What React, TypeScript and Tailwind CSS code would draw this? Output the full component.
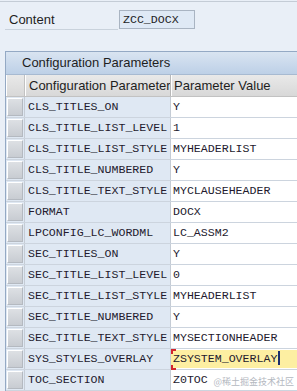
import React from "react";

const rows: [string, string][] = [
  ["CLS_TITLES_ON", "Y"],
  ["CLS_TITLE_LIST_LEVEL", "1"],
  ["CLS_TITLE_LIST_STYLE", "MYHEADERLIST"],
  ["CLS_TITLE_NUMBERED", "Y"],
  ["CLS_TITLE_TEXT_STYLE", "MYCLAUSEHEADER"],
  ["FORMAT", "DOCX"],
  ["LPCONFIG_LC_WORDML", "LC_ASSM2"],
  ["SEC_TITLES_ON", "Y"],
  ["SEC_TITLE_LIST_LEVEL", "0"],
  ["SEC_TITLE_LIST_STYLE", "MYHEADERLIST"],
  ["SEC_TITLE_NUMBERED", "Y"],
  ["SEC_TITLE_TEXT_STYLE", "MYSECTIONHEADER"],
  ["SYS_STYLES_OVERLAY", "ZSYSTEM_OVERLAY"],
  ["TOC_SECTION", "Z0TOC"],
];

const sans = "font-['Liberation_Sans',Arial,sans-serif]";
const mono = "font-['Liberation_Mono','Courier_New',monospace]";

export default function App() {
  return (
    <div className="relative w-[297px] h-[391px] overflow-hidden bg-[#e9eff7] text-[#1e1e1e]">
      <div className="h-[2px] border-b border-[#c4ccd6]" />
      <div className="flex items-start h-[49px] pt-[7px]">
        <div className={`ml-[5px] w-[113px] h-[21px] border-b border-[#c9d2dc] pl-[4px] text-[13px] leading-[21px] ${sans}`}>Content</div>
        <div className={`ml-[1px] mt-[1px] w-[76px] h-[19px] border border-[#a9b4c2] bg-[#dfe9f5] pl-[3px] text-[11.6px] leading-[17px] ${mono}`}>ZCC_DOCX</div>
      </div>

      <div className="ml-[5px] border-l border-t border-[#94a9c4]">
        <div className={`h-[23px] bg-gradient-to-b from-[#d9e4f1] to-[#bdd0e7] border-b border-[#a7bad1] pl-[16px] text-[13px] leading-[22px] ${sans}`}>
          Configuration Parameters
        </div>
        <div className="grid grid-cols-[19px_146px_1fr] h-[22px] bg-gradient-to-b from-[#e9e9e9] to-[#d8d8d8] border-b border-[#c2c2c2]">
          <div className="border-r border-[#c2c2c2] border-l border-l-white" />
          <div className={`border-r border-[#b8b8b8] border-l border-l-white pl-[3px] text-[13px] leading-[21px] whitespace-nowrap overflow-hidden ${sans}`}>Configuration Parameter</div>
          <div className={`border-l border-l-white pl-[2px] text-[13px] leading-[21px] whitespace-nowrap ${sans}`}>Parameter Value</div>
        </div>
        {rows.map(([k, v]) => {
          const focus = k === "SYS_STYLES_OVERLAY";
          return (
            <div key={k} className="grid grid-cols-[19px_146px_1fr] h-[21px] border-b border-[#ccd4de]">
              <div className="bg-[#dfe8f3] border-r border-[#c5ccd5] pl-[1px] pr-[1px] py-[1px]">
                <div className="h-full bg-gradient-to-b from-[#dde0e4] to-[#c8ccd2] border border-t-white border-l-white border-r-[#b4b9c0] border-b-[#b4b9c0]" />
              </div>
              <div className={`bg-[#dfe8f3] border-r border-[#c5ccd5] pl-[3px] text-[11.6px] leading-[20px] text-[#231a2e] whitespace-nowrap overflow-hidden ${mono}`}>{k}</div>
              {focus ? (
                <div className="relative bg-white py-[1px]">
                  <div className={`h-full bg-[#fdefa2] pl-[2px] text-[11.6px] leading-[18px] text-[#231a2e] whitespace-nowrap ${mono}`}>
                    {v}
                    <span className="inline-block w-[2px] h-[14px] ml-[1px] bg-[#1b2f6e] align-[-3px]" />
                  </div>
                  <div className="absolute left-0 top-0 w-[5px] h-[5px] border-l-2 border-t-2 border-[#d3262d]" />
                  <div className="absolute left-0 bottom-[-1px] w-[5px] h-[5px] border-l-2 border-b-2 border-[#d3262d]" />
                </div>
              ) : (
                <div className={`bg-white pl-[2px] text-[11.6px] leading-[20px] text-[#231a2e] whitespace-nowrap ${mono}`}>{v}</div>
              )}
            </div>
          );
        })}
      </div>

      <div className="absolute right-[3px] bottom-[4px] text-[9px] leading-[10px] text-[#b4b8bf] font-['Noto_Sans_CJK_SC','Liberation_Sans',sans-serif]">@稀土掘金技术社区</div>
    </div>
  );
}
